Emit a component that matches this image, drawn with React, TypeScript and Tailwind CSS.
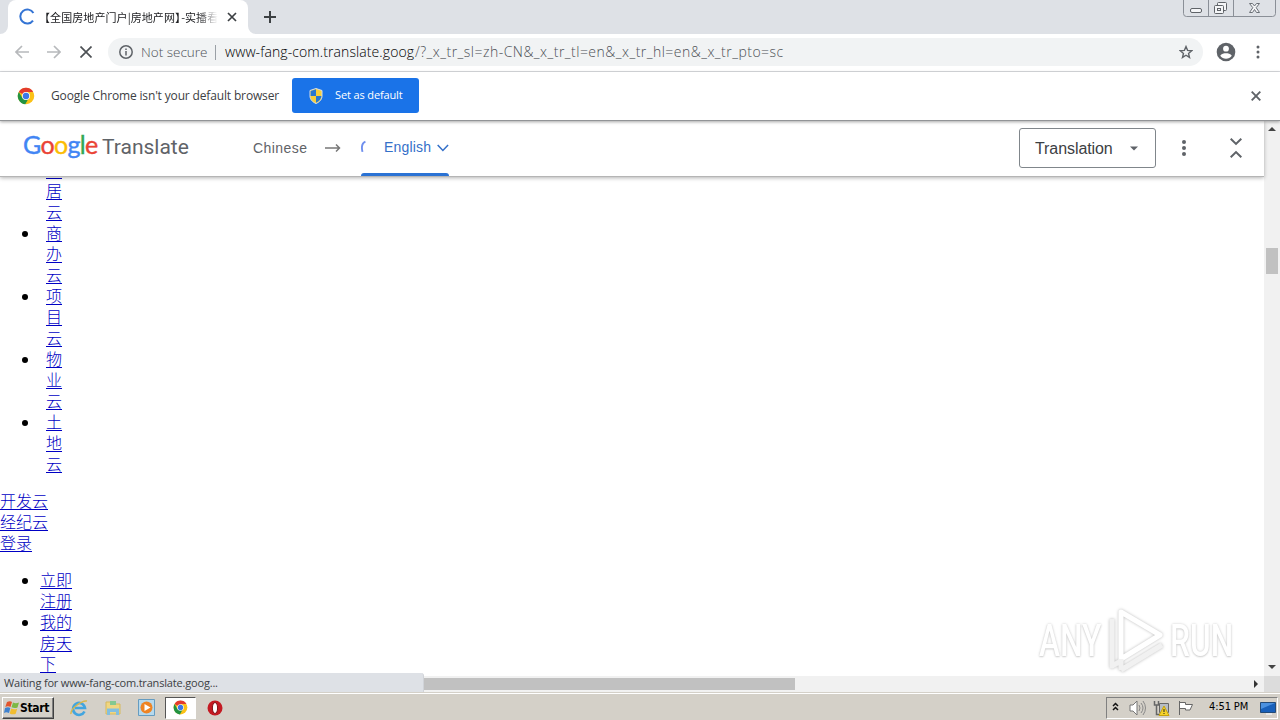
import React from 'react';

const ui = "font-['Open_Sans','Noto_Sans_CJK_SC',sans-serif]";
const tahoma = "font-['DejaVu_Sans_Condensed','DejaVu_Sans',sans-serif]";

const officeLinks = [
  ['商', '办', '云'],
  ['项', '目', '云'],
  ['物', '业', '云'],
  ['土', '地', '云'],
];

const siteLinks = ['开发云', '经纪云', '登录'];

const accountLinks = [
  ['立即', '注册'],
  ['我的', '房天', '下'],
];

const ChromeLogo = ({ className }: { className?: string }) => (
  <svg viewBox="0 0 48 48" className={className}>
    <circle cx="24" cy="24" r="22" fill="#fbc116" />
    <path d="M24 24 4.9 13A22 22 0 0 1 43.1 13H24Z" fill="#e33b2e" />
    <path d="M4.9 13A22 22 0 0 0 22 46l10-17.4-8-4.6-9.5 5.5Z" fill="#229342" />
    <circle cx="24" cy="24" r="10.5" fill="#fff" />
    <circle cx="24" cy="24" r="8.5" fill="#3b78e7" />
  </svg>
);

const TabStrip = () => (
  <div className="relative flex h-[34px] shrink-0 items-end bg-[#dee1e6]">
    <svg width="8" height="8" viewBox="0 0 8 8"><path d="M8 0V8H0A8 8 0 0 0 8 0Z" fill="#fff" /></svg>
    <div className="flex h-[34px] w-[240px] items-center rounded-t-lg bg-white">
      <svg width="18" height="18" viewBox="0 0 18 18" fill="none" className="ml-[10px] shrink-0">
        <path d="M15.4 5A7 7 0 1 0 15 12.6" stroke="#3474d4" strokeWidth="2" />
      </svg>
      <div className="ml-[9px] w-[173px] overflow-hidden whitespace-nowrap font-['Noto_Sans_CJK_SC',sans-serif] text-[11px] leading-[18px] tracking-[0.080px] text-[#202124] [mask-image:linear-gradient(to_right,black_88%,transparent)]">
        <span className="-ml-[6px]">【</span>全国房地产门户|房地产网<span className="-mr-[5px]">】</span>-实播看
      </div>
      <svg width="10" height="10" viewBox="0 0 10 10" className="ml-[9px]"><path d="m1 1 8 8M9 1 1 9" stroke="#3c4043" strokeWidth="1.700" /></svg>
    </div>
    <svg width="8" height="8" viewBox="0 0 8 8"><path d="M0 0V8H8A8 8 0 0 1 0 0Z" fill="#fff" /></svg>
    <svg width="12" height="12" viewBox="0 0 12 12" className="mb-[11px] ml-2"><path d="M6 0V12M0 6H12" stroke="#3c4043" strokeWidth="2" /></svg>
    <svg width="93" height="17" viewBox="0 0 93 17" fill="none" className="absolute top-0 right-[4px]">
      <path d="M.5 0V13.500a3 3 0 0 0 3 3H89.500a3 3 0 0 0 3-3V0M25.500 0V16M50.500 0V16" stroke="#8a8f97" />
      <rect x="7.500" y="8.500" width="11" height="4" rx="1.500" fill="#f4f5f7" stroke="#5f6368" />
      <rect x="34.500" y="2.500" width="9" height="8" rx="1" fill="#f4f5f7" stroke="#5f6368" />
      <rect x="31.500" y="5.500" width="9" height="8" rx="1" fill="#f4f5f7" stroke="#5f6368" />
      <rect x="34.500" y="8.500" width="3" height="2" stroke="#5f6368" />
      <path d="M66.500 3.500h3l2 2.500 2-2.500h3l-3.300 4.200 3.300 4.800h-3l-2-3-2 3h-3l3.300-4.800Z" fill="#f4f5f7" stroke="#6b7077" />
    </svg>
  </div>
);

const Toolbar = () => (
  <div className="flex h-[38px] shrink-0 items-center border-b border-[#dadce0] bg-white pb-px">
    <svg width="14" height="14" viewBox="0 0 14 14" fill="none" className="ml-[15px]"><path d="M14 7H1M7 1 1 7l6 6" stroke="#b7b9bc" strokeWidth="1.700" /></svg>
    <svg width="14" height="14" viewBox="0 0 14 14" fill="none" className="ml-[18px]"><path d="M0 7H13M7 1l6 6-6 6" stroke="#b7b9bc" strokeWidth="1.700" /></svg>
    <svg width="12" height="12" viewBox="0 0 12 12" className="ml-[19px]"><path d="m.5.5 11 11M11.500.5l-11 11" stroke="#4d5155" strokeWidth="1.700" /></svg>
    <div className={`ml-4 flex h-7 w-[1095px] items-center rounded-full bg-[#f1f3f4] ${ui}`}>
      <svg width="14" height="14" viewBox="0 0 14 14" fill="none" className="ml-[11px] shrink-0">
        <circle cx="7" cy="7" r="6.200" stroke="#5f6368" strokeWidth="1.500" />
        <path d="M7 6v4.500M7 3.400v1.600" stroke="#5f6368" strokeWidth="1.500" />
      </svg>
      <span className="ml-2 w-[67px] whitespace-nowrap text-[13.500px] font-light text-[#4d5156]">Not secure</span>
      <span className="ml-[7px] h-[15px] w-px bg-[#9aa0a6]" />
      <span className="ml-[9px] w-[190px] pb-px whitespace-nowrap text-[14px] font-light tracking-[0.090px] text-black">www-fang-com.translate.goog</span>
      <span className="pb-px whitespace-nowrap text-[14px] font-light tracking-[0.480px] text-[#4d5156]">/?_x_tr_sl=zh-CN&amp;_x_tr_tl=en&amp;_x_tr_hl=en&amp;_x_tr_pto=sc</span>
      <svg width="14" height="14" viewBox="0 0 16 16" fill="none" className="mr-[10px] ml-auto">
        <path d="m8 1.800 1.800 4.300 4.700.4-3.600 3.100 1.100 4.600L8 11.700l-4 2.500 1.100-4.600L1.500 6.500l4.700-.4Z" stroke="#5f6368" strokeWidth="1.600" />
      </svg>
    </div>
    <svg width="20" height="20" viewBox="0 0 20 20" className="ml-[13px]">
      <circle cx="10" cy="10" r="9.300" fill="#5f6368" />
      <circle cx="10" cy="6.700" r="2.900" fill="#fff" />
      <path d="M4.200 13.800c1.200-2 3.800-2.600 5.800-2.600s4.600.6 5.800 2.600c-1.300 2-3.500 3-5.800 3s-4.500-1-5.800-3Z" fill="#fff" />
    </svg>
    <svg width="4" height="14" viewBox="0 0 4 14" fill="#5f6368" className="ml-[20px]"><circle cx="2" cy="2" r="1.500" /><circle cx="2" cy="7" r="1.500" /><circle cx="2" cy="12" r="1.500" /></svg>
  </div>
);

const DefaultBrowserBar = () => (
  <div className={`relative z-20 flex h-[49px] shrink-0 items-center border-b border-[#929497] bg-white pb-px shadow-[0_1px_3px_rgba(0,0,0,0.35)] ${ui}`}>
    <ChromeLogo className="ml-[17px] size-[18px]" />
    <span className="ml-4 w-[229px] whitespace-nowrap text-[12px] tracking-[-0.150px] text-[#3c4043]">Google Chrome isn't your default browser</span>
    <button className="ml-3 flex h-[35px] w-[127px] items-center rounded-[3px] bg-[#1a73e8] text-[11px] text-white">
      <svg width="14" height="16" viewBox="0 0 14 16" className="ml-[17px]">
        <path d="M7 .5 1 2.500V8c0 3.500 2.500 6 6 7.500 3.500-1.500 6-4 6-7.500V2.500Z" fill="#f7cf3a" stroke="#d8dfe6" />
        <path d="M7 1.300V8H1.600V3ZM7 8h5.400c-.2 3-2.400 5.300-5.400 6.700Z" fill="#2878d0" />
      </svg>
      <span className="ml-3 whitespace-nowrap tracking-[-0.130px]">Set as default</span>
    </button>
    <svg width="10" height="10" viewBox="0 0 10 10" className="mr-[19px] ml-auto"><path d="m.7.7 8.600 8.600M9.300.7.7 9.300" stroke="#5f6368" strokeWidth="1.900" /></svg>
  </div>
);

const TranslateBar = () => (
  <div className="relative z-10 flex h-[56px] shrink-0 items-center border-b border-[#b5b5b5] bg-white pb-px font-['Liberation_Sans',sans-serif] shadow-[0_1px_4px_rgba(0,0,0,0.3)]">
    <div className="mb-2 ml-[23px] flex h-7 w-[166px] items-baseline whitespace-nowrap font-['Lato',sans-serif] text-[25px] leading-7">
      <span className="flex w-[79px] tracking-[-0.700px] [-webkit-text-stroke:0.4px_currentColor]">
        <span className="text-[#4285f4]">G</span>
        <span className="text-[#ea4335]">o</span>
        <span className="text-[#fbbc05]">o</span>
        <span className="text-[#4285f4]">g</span>
        <span className="text-[#34a853]">l</span>
        <span className="text-[#ea4335]">e</span>
      </span>
      <span className="font-['Roboto',sans-serif] text-[21px] text-[#5f6368]">Translate</span>
    </div>
    <span className="ml-16 w-[55px] text-[14px] tracking-[0.450px] text-[#5f6368]">Chinese</span>
    <svg width="16" height="10" viewBox="0 0 16 10" fill="none" className="ml-[17px]"><path d="M0 5H14.500M11 1.500 14.500 5 11 8.500" stroke="#777" strokeWidth="1.500" /></svg>
    <div className="-mb-px ml-5 flex h-[55px] w-[88px] flex-col">
      <div className="flex h-[52px] items-center text-[#3470c9]">
        <svg width="5" height="14" viewBox="0 0 5 14" fill="none"><path d="M4.500 1.500C1 3 .3 7 1.500 12" stroke="#6f8fee" strokeWidth="1.900" /></svg>
        <span className="ml-[18px] w-[48px] text-[14px] tracking-[0.200px]">English</span>
        <svg width="12" height="8" viewBox="0 0 12 8" fill="none" className="mt-[2px] ml-[6px]"><path d="m.7 1 5.300 5.500L11.300 1" stroke="#3470c9" strokeWidth="1.600" /></svg>
      </div>
      <div className="h-[3px] rounded-t-[3px] bg-[#2a72d4]" />
    </div>
    <div className="ml-[570px] flex h-10 w-[137px] items-center rounded-[3px] border border-[#80868b] text-[16px] text-[#3c4043]">
      <span className="ml-[15px] w-[79px] pt-px tracking-[-0.080px]">Translation</span>
      <svg width="8" height="5" viewBox="0 0 8 5" className="ml-4"><path d="M0 .5H8L4 4.500Z" fill="#5f6368" /></svg>
    </div>
    <svg width="4" height="16" viewBox="0 0 4 16" fill="#5f6368" className="ml-[26px]"><circle cx="2" cy="2" r="2" /><circle cx="2" cy="8" r="2" /><circle cx="2" cy="14" r="2" /></svg>
    <svg width="12" height="20" viewBox="0 0 12 20" fill="none" className="ml-[44px]"><path d="m.7.7 5.300 5.200L11.300.7M.7 19.300 6 14.100l5.300 5.200" stroke="#5f6368" strokeWidth="2" /></svg>
  </div>
);

const PageContent = () => (
  <div className="relative min-h-0 flex-1 overflow-hidden bg-white font-['Noto_Sans_CJK_SC',sans-serif] text-[16px] leading-[21px] font-light text-[#0000c4]">
    <div className="-mt-[18px] pl-[46px] underline underline-offset-2">
      <div>企</div>
      <div>居</div>
      <div>云</div>
    </div>
    <ul>
      {officeLinks.map((chars) => (
        <li key={chars[0]} className="flex">
          <span className="mt-[9px] ml-[22px] size-[6px] rounded-full bg-black" />
          <a href="#" className="ml-[18px] flex flex-col underline underline-offset-2">
            {chars.map((c, i) => <span key={i}>{c}</span>)}
          </a>
        </li>
      ))}
    </ul>
    <div className="mt-4 flex flex-col">
      {siteLinks.map((label) => <a key={label} href="#" className="underline underline-offset-2">{label}</a>)}
    </div>
    <ul className="mt-4">
      {accountLinks.map((lines) => (
        <li key={lines[0]} className="flex">
          <span className="mt-[9px] ml-[22px] size-[6px] rounded-full bg-black" />
          <a href="#" className="ml-3 flex flex-col underline underline-offset-2">
            {lines.map((l) => <span key={l}>{l}</span>)}
          </a>
        </li>
      ))}
    </ul>
    <div className="absolute top-[429px] left-[1039px] flex h-[70px] w-[197px] items-center justify-between font-['Roboto',sans-serif] text-[44px] leading-none font-medium text-white">
      <span className="w-[66px] origin-left scale-x-[0.720] [text-shadow:0_0_3px_#ccc,0_1px_2px_#d4d4d4]">ANY</span>
      <svg width="60" height="68" viewBox="0 0 60 68" fill="none" className="absolute left-[68px] drop-shadow-[0_0_1.5px_#bbb]">
        <path d="M14 5 53 28 14 52Z" stroke="#fff" strokeWidth="5" strokeLinejoin="round" />
        <path d="M5 12V59L14 54M14 63 55 38M14 63V52" stroke="#f1f1f1" strokeWidth="5" strokeLinejoin="round" />
      </svg>
      <span className="w-[66px] origin-left scale-x-[0.720] [text-shadow:0_0_3px_#ccc,0_1px_2px_#d4d4d4]">RUN</span>
    </div>
  </div>
);

const VerticalScrollbar = () => (
  <div className="flex w-4 shrink-0 flex-col items-center bg-[#f1f1f1]">
    <svg width="8" height="4" viewBox="0 0 8 4" className="mt-[6px]"><path d="M0 4H8L4 0Z" fill="#444" /></svg>
    <div className="mt-[117px] h-[26px] w-3 bg-[#c1c1c1]" />
    <svg width="8" height="4" viewBox="0 0 8 4" className="mt-auto mb-[7px]"><path d="M0 0H8L4 4Z" fill="#444" /></svg>
  </div>
);

const HorizontalScrollbar = () => (
  <div className="relative flex h-4 shrink-0 items-center bg-[#f1f1f1]">
    <div className="ml-[424px] h-3 w-[371px] bg-[#c1c1c1]" />
    <svg width="4" height="8" viewBox="0 0 4 8" className="mr-[6px] ml-auto"><path d="M0 0V8L4 4Z" fill="#333" /></svg>
    <div className="h-4 w-4 bg-[#dcdcdc]" />
    <div className="absolute bottom-0 left-0 flex h-[19px] w-[424px] items-center rounded-tr-[3px] border-r border-[#d0d3d8] bg-[#dee1e6] pt-[2px] pl-1 font-['Open_Sans',sans-serif] text-[11px] tracking-[-0.180px] text-[#3c4043]">Waiting for www-fang-com.translate.goog...</div>
  </div>
);

const Taskbar = () => (
  <div className={`flex h-7 shrink-0 items-center border-t border-[#d4d0c8] bg-[#d4d0c8] shadow-[inset_0_1px_0_#fff] ${tahoma}`}>
    <button className="mt-[2px] ml-[2px] flex h-[22px] w-[52px] items-center border border-t-white border-r-[#404040] border-b-[#404040] border-l-white text-[12px] font-bold tracking-[-0.300px] text-black shadow-[inset_-1px_-1px_0_#808080]">
      <svg width="16" height="16" viewBox="0 0 16 16" className="ml-px shrink-0">
        <path d="M3 2c2-1 4-1 5 0L6.500 7C5 6 3 6 1.300 7Z" fill="#e2552d" />
        <path d="M9 2.500c2 1 4 .8 6 0L13.500 7.500c-2 .9-4 .7-6-.2Z" fill="#7db845" />
        <path d="M1 8c2-1 4-1 5.300 0L5 13c-2-1-3.500-1-5 0Z" fill="#3f82cf" />
        <path d="M7.200 8.500c2 1 4 1 6 .2l-1.500 5c-2 1-4 .6-6-.3Z" fill="#f1bd31" />
      </svg>
      Start
    </button>
    <svg width="18" height="18" viewBox="0 0 18 18" fill="none" className="mt-[2px] ml-4">
      <path d="M14.500 12.500A6 6 0 1 1 15 9H5" stroke="#42a5df" strokeWidth="2.600" />
      <path d="M1 15C0 10 12 1 17 2" stroke="#d9b74b" strokeWidth="1.500" />
    </svg>
    <svg width="18" height="18" viewBox="0 0 18 18" className="mt-[2px] ml-4">
      <path d="M2 3h5l1 2h8v10H2Z" fill="#f0d681" stroke="#d6b95e" />
      <path d="M6 2h6v4H6Z" fill="#83c891" />
      <path d="M3 16V9.500h12V16h-3v-3H6v3Z" fill="#83bfdf" />
    </svg>
    <svg width="17" height="17" viewBox="0 0 17 17" className="mt-[2px] ml-4">
      <path d="M.5.5h16v16H.5Z" fill="#b6d9ed" stroke="#659cc1" />
      <circle cx="8.500" cy="8.500" r="6" fill="#ee8424" />
      <path d="M6.500 5v7l6-3.500Z" fill="#fff" />
    </svg>
    <div className="mt-[2px] ml-[10px] flex h-[22px] w-[31px] items-center justify-center border border-t-[#555] border-r-white border-b-white border-l-[#555] bg-white">
      <ChromeLogo className="size-[15px]" />
    </div>
    <svg width="16" height="16" viewBox="0 0 16 16" className="mt-[2px] ml-[11px]">
      <circle cx="8" cy="8" r="7.500" fill="#c41a22" />
      <ellipse cx="8" cy="8" rx="2.600" ry="5.500" fill="#fff" stroke="#821016" />
    </svg>
    <div className="mt-[2px] mr-[2px] ml-auto flex h-[22px] w-[172px] items-center border border-t-[#808080] border-r-white border-b-white border-l-[#808080]">
      <svg width="7" height="9" viewBox="0 0 7 9" fill="none" className="mb-[3px] ml-[5px]"><path d="m1 4 2.500-2.500L6 4M1 8l2.500-2.500L6 8" stroke="#111" strokeWidth="1.500" /></svg>
      <svg width="17" height="16" viewBox="0 0 17 16" fill="none" className="ml-[10px]">
        <path d="M1 5h3l4-4v14l-4-4H1Z" fill="#fff" stroke="#777" />
        <path d="M10 5q2 3 0 6M12 3q4 5 0 10M14 1q5 7 0 14" stroke="#888" />
      </svg>
      <svg width="17" height="16" viewBox="0 0 17 16" fill="none" className="ml-[7px]">
        <path d="M6.500 3.500h9v9h-9Z" fill="#b6bcc4" stroke="#666" />
        <path d="M1.500 1v4h4V1M3.500 5v9.500h4" stroke="#666" strokeWidth="1.500" />
        <path d="m11 6 5 9.500H6Z" fill="#f6d32b" stroke="#c5a10c" />
        <path d="M11 9v3M11 13v1" stroke="#222" />
      </svg>
      <svg width="17" height="16" viewBox="0 0 17 16" className="ml-[7px]"><path d="M2.500 1v14M2.500 2.500h6v2h7L13 10H8.500V8.500h-6" fill="#fff" stroke="#666" /></svg>
      <span className="ml-[15px] w-[40px] whitespace-nowrap text-[11px] tracking-[-0.100px] text-black">4:51 PM</span>
      <svg width="16" height="14" viewBox="0 0 16 14" className="ml-[11px]"><path d="M.5 1.500h15v10H.5Z" fill="#1860ba" stroke="#234b78" /><path d="M1 2h14L1 8Z" fill="#4b91df" /><path d="M6 12h6v2H6Z" fill="#e7e7e7" /></svg>
    </div>
  </div>
);

const App = () => {
  return (
    <div className="flex h-[720px] w-[1280px] flex-col overflow-hidden bg-white">
      <TabStrip />
      <Toolbar />
      <DefaultBrowserBar />
      <div className="flex h-[555px] shrink-0">
        <div className="flex w-[1264px] flex-col">
          <TranslateBar />
          <PageContent />
        </div>
        <VerticalScrollbar />
      </div>
      <HorizontalScrollbar />
      <Taskbar />
    </div>
  );
};

export default App;
